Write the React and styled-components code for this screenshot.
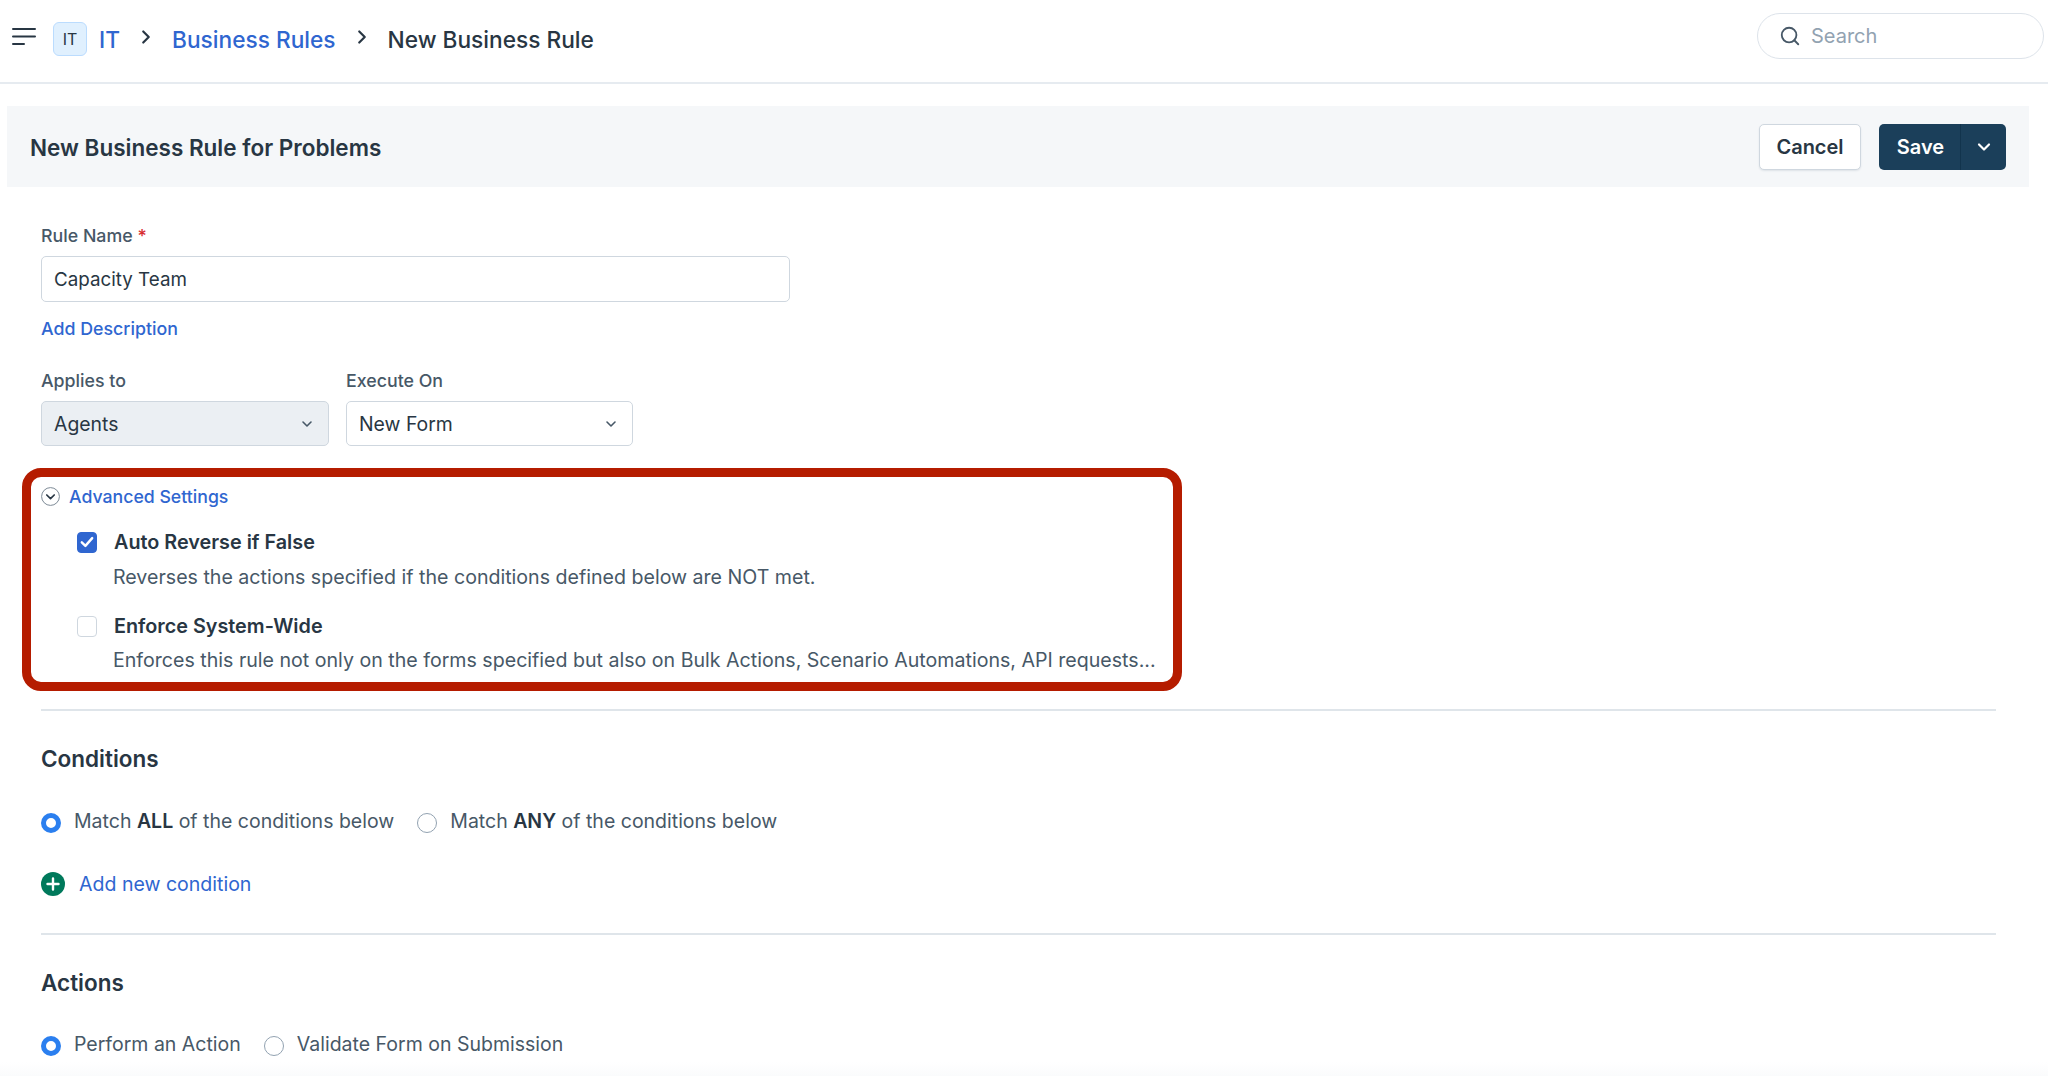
import React from "react";
import styled, { createGlobalStyle } from "styled-components";
import { Search, ChevronRight, ChevronDown } from "lucide-react";

const Global = createGlobalStyle`
  html, body { margin: 0; padding: 0; background: #fff; }
  body { font-family: Inter, "Liberation Sans", sans-serif; color: #283643; overflow: hidden; }
  * { box-sizing: border-box; }
`;

const LINK = "#2f66d0";

const Page = styled.div`
  width: 2048px;
  height: 1076px;
  overflow: hidden;
  display: flex;
  flex-direction: column;
  background: linear-gradient(to bottom, #fff 1062px, #fafbfc 1076px);
`;

const TopBar = styled.header`
  height: 84px;
  flex: none;
  display: flex;
  align-items: center;
  padding: 0 4px 4px 12px;
  border-bottom: 2px solid #e6ebf0;
  background: #fff;
`;

const Hamburger = styled.svg`
  width: 24px;
  height: 18px;
  flex: none;
  margin-top: -5px;
`;

const Badge = styled.span`
  width: 34px;
  height: 34px;
  margin-left: 17px;
  flex: none;
  display: flex;
  align-items: center;
  justify-content: center;
  background: #e0f0fe;
  border: 1px solid #bbdcfe;
  border-radius: 6px;
  font-size: 16px;
  color: #283643;
`;

const Crumb = styled.span`
  font-size: 22.7px;
  font-weight: 500;
  color: ${(p) => (p.$current ? "#283643" : LINK)};
  margin-left: ${(p) => p.$gap || 0}px;
  white-space: nowrap;
`;

const Sep = styled.span`
  display: flex;
  margin-left: ${(p) => p.$gap}px;
  color: #283643;
  margin-top: -4px;
`;

const SearchBox = styled.div`
  margin-left: auto;
  width: 287px;
  height: 46px;
  margin-top: -6px;
  border: 1px solid #dde3ea;
  border-radius: 23px;
  display: flex;
  align-items: center;
  padding-left: 21px;
  gap: 10px;
  font-size: 20px;
  color: #92a2b1;
  background: #fff;
  svg { color: #475867; }
`;

const HeaderBand = styled.div`
  flex: none;
  margin: 22px 19px 0 7px;
  height: 81px;
  background: #f5f7f9;
  display: flex;
  align-items: center;
  justify-content: space-between;
  padding: 0 23px;
`;

const Title = styled.h1`
  margin: 2px 0 0;
  font-size: 22.5px;
  font-weight: 600;
  color: #283643;
`;

const Actions = styled.div`
  display: flex;
  gap: 18px;
`;

const CancelButton = styled.button`
  width: 102px;
  height: 46px;
  font: 600 20px Inter, sans-serif;
  color: #283643;
  background: #fff;
  border: 1px solid #cfd7df;
  border-radius: 5px;
  box-shadow: 0 1px 2px rgba(18, 52, 77, 0.1);
`;

const SplitButton = styled.div`
  width: 127px;
  height: 46px;
  display: flex;
  background: #1b3f5a;
  border-radius: 5px;
  color: #fff;
`;

const SaveLabel = styled.span`
  width: 82px;
  padding-left: 2px;
  display: flex;
  align-items: center;
  justify-content: center;
  font-size: 20px;
  font-weight: 600;
  border-right: 1px solid #12344d;
`;

const SaveCaret = styled.span`
  flex: 1;
  display: flex;
  align-items: center;
  justify-content: center;
`;

const Form = styled.main`
  padding: 38px 52px 0 41px;
  display: flex;
  flex-direction: column;
`;

const FieldLabel = styled.label`
  display: block;
  font-size: 17.8px;
  line-height: 22px;
  font-weight: 500;
  color: #475867;
  em { color: #d72d30; font-style: normal; }
`;

const TextInput = styled.div`
  margin-top: 9px;
  width: 749px;
  height: 46px;
  border: 1px solid #cfd7df;
  border-radius: 5px;
  padding-left: 12px;
  display: flex;
  align-items: center;
  font-size: 18.8px;
  color: #283643;
`;

const TextLink = styled.a`
  display: block;
  margin-top: 16px;
  font-size: 17.8px;
  line-height: 22px;
  font-weight: 500;
  color: ${LINK};
`;

const SelectRow = styled.div`
  display: flex;
  gap: 17px;
  margin-top: 30px;
`;

const Field = styled.div`
  width: ${(p) => p.$w}px;
`;

const Select = styled.div`
  margin-top: 9px;
  height: 45px;
  border: 1px solid #cfd7df;
  border-radius: 5px;
  background: ${(p) => (p.$disabled ? "#ebeff3" : "#fff")};
  padding: 0 13px 0 12px;
  display: flex;
  align-items: center;
  justify-content: space-between;
  font-size: 19.4px;
  color: #283643;
  svg { color: #475867; }
`;

const Advanced = styled.section`
  position: relative;
  margin-top: 39px;
`;

const Highlight = styled.div`
  position: absolute;
  left: -19px;
  top: -17px;
  width: 1160px;
  height: 223px;
  border: 9px solid #b51c00;
  border-radius: 19px;
  pointer-events: none;
`;

const Toggle = styled.div`
  display: flex;
  align-items: center;
  gap: 9px;
  height: 22px;
  font-size: 17.7px;
  font-weight: 500;
  color: ${LINK};
`;

const OptionRow = styled.div`
  display: flex;
  align-items: center;
  gap: 17px;
  margin: ${(p) => p.$top}px 0 0 36px;
  height: 26px;
`;

const Check = styled.span`
  width: 20px;
  height: 21px;
  flex: none;
  border-radius: 4px;
  display: flex;
  align-items: center;
  justify-content: center;
  background: ${(p) => (p.$on ? LINK : "#fff")};
  border: 1px solid ${(p) => (p.$on ? LINK : "#cfd7df")};
`;

const OptionTitle = styled.span`
  font-size: 19.8px;
  font-weight: 600;
  color: #283643;
`;

const OptionHelp = styled.p`
  margin: ${(p) => p.$top}px 0 0 72px;
  font-size: 19.6px;
  line-height: 26px;
  color: #475867;
  white-space: nowrap;
`;

const Divider = styled.hr`
  margin: 36px 0 0;
  border: 0;
  height: 2px;
  background: #dfe5ea;
  width: 1955px;
`;

const SectionTitle = styled.h2`
  margin: 33px 0 0;
  font-size: 22.5px;
  line-height: 30px;
  font-weight: 600;
  color: #283643;
`;

const RadioRow = styled.div`
  margin-top: ${(p) => p.$top}px;
  display: flex;
  align-items: center;
  height: 26px;
  font-size: 19.5px;
  color: #475867;
  b { font-weight: 600; color: #283643; }
`;

const Radio = styled.span`
  width: 20px;
  height: 20px;
  flex: none;
  border-radius: 50%;
  margin: 3px 13px 0 ${(p) => p.$gap || 0}px;
  background: #fff;
  border: ${(p) => (p.$on ? "5px solid #2b7fef" : "1px solid #92a2b1")};
`;

const AddRow = styled.div`
  margin-top: 37px;
  display: flex;
  align-items: center;
  gap: 14px;
  height: 26px;
  font-size: 19.55px;
  color: ${LINK};
`;

const PlusCircle = () => (
  <svg width="24" height="24" viewBox="0 0 24 24" aria-hidden="true">
    <circle cx="12" cy="12" r="12" fill="#00795b" />
    <path d="M12 6.5v11M6.5 12h11" stroke="#fff" strokeWidth="2.4" strokeLinecap="round" />
  </svg>
);

const CircleCaret = () => (
  <svg width="19" height="19" viewBox="0 0 19 19" fill="none" aria-hidden="true">
    <circle cx="9.5" cy="9.5" r="8.9" stroke="#7d8a96" strokeWidth="1" />
    <path d="M5.8 8l3.7 3.7L13.2 8" stroke="#283643" strokeWidth="1.7" strokeLinecap="round" strokeLinejoin="round" />
  </svg>
);

const Tick = () => (
  <svg width="14" height="12" viewBox="0 0 14 12" fill="none" aria-hidden="true">
    <path d="M1.8 6.3l3.6 3.6 6.8-7.8" stroke="#fff" strokeWidth="2.4" strokeLinecap="round" strokeLinejoin="round" />
  </svg>
);

export default function App() {
  return (
    <Page>
      <Global />
      <TopBar>
        <Hamburger viewBox="0 0 24 18" aria-hidden="true">
          <path d="M1 1h22M1 8.5h22M1 16h11" stroke="#283643" strokeWidth="2" strokeLinecap="round" />
        </Hamburger>
        <Badge>IT</Badge>
        <Crumb $gap={12}>IT</Crumb>
        <Sep $gap={15}><ChevronRight size={22} strokeWidth={2.4} /></Sep>
        <Crumb $gap={15}>Business Rules</Crumb>
        <Sep $gap={15}><ChevronRight size={22} strokeWidth={2.4} /></Sep>
        <Crumb $current $gap={15}>New Business Rule</Crumb>
        <SearchBox><Search size={22} strokeWidth={2} />Search</SearchBox>
      </TopBar>

      <HeaderBand>
        <Title>New Business Rule for Problems</Title>
        <Actions>
          <CancelButton>Cancel</CancelButton>
          <SplitButton>
            <SaveLabel>Save</SaveLabel>
            <SaveCaret><ChevronDown size={20} strokeWidth={2.6} /></SaveCaret>
          </SplitButton>
        </Actions>
      </HeaderBand>

      <Form>
        <FieldLabel>Rule Name <em>*</em></FieldLabel>
        <TextInput>Capacity Team</TextInput>
        <TextLink>Add Description</TextLink>

        <SelectRow>
          <Field $w={288}>
            <FieldLabel>Applies to</FieldLabel>
            <Select $disabled>Agents<ChevronDown size={16} strokeWidth={2.4} /></Select>
          </Field>
          <Field $w={287}>
            <FieldLabel>Execute On</FieldLabel>
            <Select>New Form<ChevronDown size={16} strokeWidth={2.4} /></Select>
          </Field>
        </SelectRow>

        <Advanced>
          <Highlight />
          <Toggle><CircleCaret />Advanced Settings</Toggle>
          <OptionRow $top={22}>
            <Check $on><Tick /></Check>
            <OptionTitle>Auto Reverse if False</OptionTitle>
          </OptionRow>
          <OptionHelp $top={9}>Reverses the actions specified if the conditions defined below are NOT met.</OptionHelp>
          <OptionRow $top={23}>
            <Check />
            <OptionTitle>Enforce System-Wide</OptionTitle>
          </OptionRow>
          <OptionHelp $top={8}>Enforces this rule not only on the forms specified but also on Bulk Actions, Scenario Automations, API requests...</OptionHelp>
        </Advanced>

        <Divider />

        <SectionTitle>Conditions</SectionTitle>
        <RadioRow $top={34}>
          <Radio $on />
          <span>Match <b>ALL</b> of the conditions below</span>
          <Radio $gap={23} />
          <span>Match <b>ANY</b> of the conditions below</span>
        </RadioRow>
        <AddRow><PlusCircle />Add new condition</AddRow>

        <Divider />

        <SectionTitle>Actions</SectionTitle>
        <RadioRow $top={33}>
          <Radio $on />
          <span>Perform an Action</span>
          <Radio $gap={23} />
          <span>Validate Form on Submission</span>
        </RadioRow>
      </Form>
    </Page>
  );
}
